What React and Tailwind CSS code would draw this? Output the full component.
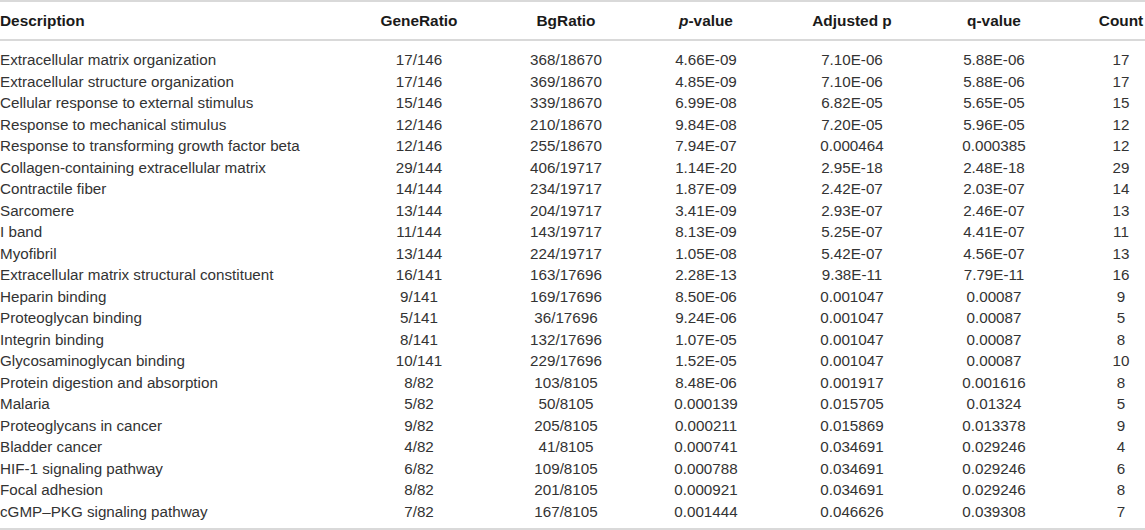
import React from "react";

const rows = [
  ["Extracellular matrix organization", "17/146", "368/18670", "4.66E-09", "7.10E-06", "5.88E-06", "17"],
  ["Extracellular structure organization", "17/146", "369/18670", "4.85E-09", "7.10E-06", "5.88E-06", "17"],
  ["Cellular response to external stimulus", "15/146", "339/18670", "6.99E-08", "6.82E-05", "5.65E-05", "15"],
  ["Response to mechanical stimulus", "12/146", "210/18670", "9.84E-08", "7.20E-05", "5.96E-05", "12"],
  ["Response to transforming growth factor beta", "12/146", "255/18670", "7.94E-07", "0.000464", "0.000385", "12"],
  ["Collagen-containing extracellular matrix", "29/144", "406/19717", "1.14E-20", "2.95E-18", "2.48E-18", "29"],
  ["Contractile fiber", "14/144", "234/19717", "1.87E-09", "2.42E-07", "2.03E-07", "14"],
  ["Sarcomere", "13/144", "204/19717", "3.41E-09", "2.93E-07", "2.46E-07", "13"],
  ["I band", "11/144", "143/19717", "8.13E-09", "5.25E-07", "4.41E-07", "11"],
  ["Myofibril", "13/144", "224/19717", "1.05E-08", "5.42E-07", "4.56E-07", "13"],
  ["Extracellular matrix structural constituent", "16/141", "163/17696", "2.28E-13", "9.38E-11", "7.79E-11", "16"],
  ["Heparin binding", "9/141", "169/17696", "8.50E-06", "0.001047", "0.00087", "9"],
  ["Proteoglycan binding", "5/141", "36/17696", "9.24E-06", "0.001047", "0.00087", "5"],
  ["Integrin binding", "8/141", "132/17696", "1.07E-05", "0.001047", "0.00087", "8"],
  ["Glycosaminoglycan binding", "10/141", "229/17696", "1.52E-05", "0.001047", "0.00087", "10"],
  ["Protein digestion and absorption", "8/82", "103/8105", "8.48E-06", "0.001917", "0.001616", "8"],
  ["Malaria", "5/82", "50/8105", "0.000139", "0.015705", "0.01324", "5"],
  ["Proteoglycans in cancer", "9/82", "205/8105", "0.000211", "0.015869", "0.013378", "9"],
  ["Bladder cancer", "4/82", "41/8105", "0.000741", "0.034691", "0.029246", "4"],
  ["HIF-1 signaling pathway", "6/82", "109/8105", "0.000788", "0.034691", "0.029246", "6"],
  ["Focal adhesion", "8/82", "201/8105", "0.000921", "0.034691", "0.029246", "8"],
  ["cGMP\u2013PKG signaling pathway", "7/82", "167/8105", "0.001444", "0.046626", "0.039308", "7"],
];

const grid = "grid grid-cols-[345px_148px_146px_134px_158px_126px_40px_48px]";

export default function App() {
  return (
    <div
      className="w-[1145px] h-[530px] bg-white overflow-hidden"
      style={{ fontFamily: '"Liberation Sans", Arial, sans-serif' }}
    >
      <div className={`${grid} h-[41px] items-center border-t-2 border-b-2 border-[#d9d9d9] font-bold text-[15.4px] text-[#1a1a1a]`}>
        <div>Description</div>
        <div className="text-center">GeneRatio</div>
        <div className="text-center">BgRatio</div>
        <div className="text-center"><i>p</i>-value</div>
        <div className="text-center">Adjusted p</div>
        <div className="text-center">q-value</div>
        <div></div>
        <div className="text-center">Count</div>
      </div>
      <div className="pt-[8px] pb-[6px] border-b-2 border-[#d9d9d9] text-[15.2px] text-[#333333]">
        {rows.map((r, i) => (
          <div key={i} className={`${grid} h-[21.5px] items-center leading-none`}>
            <div className="whitespace-nowrap">{r[0]}</div>
            <div className="text-center">{r[1]}</div>
            <div className="text-center">{r[2]}</div>
            <div className="text-center">{r[3]}</div>
            <div className="text-center">{r[4]}</div>
            <div className="text-center">{r[5]}</div>
            <div></div>
            <div className="text-center">{r[6]}</div>
          </div>
        ))}
      </div>
    </div>
  );
}
